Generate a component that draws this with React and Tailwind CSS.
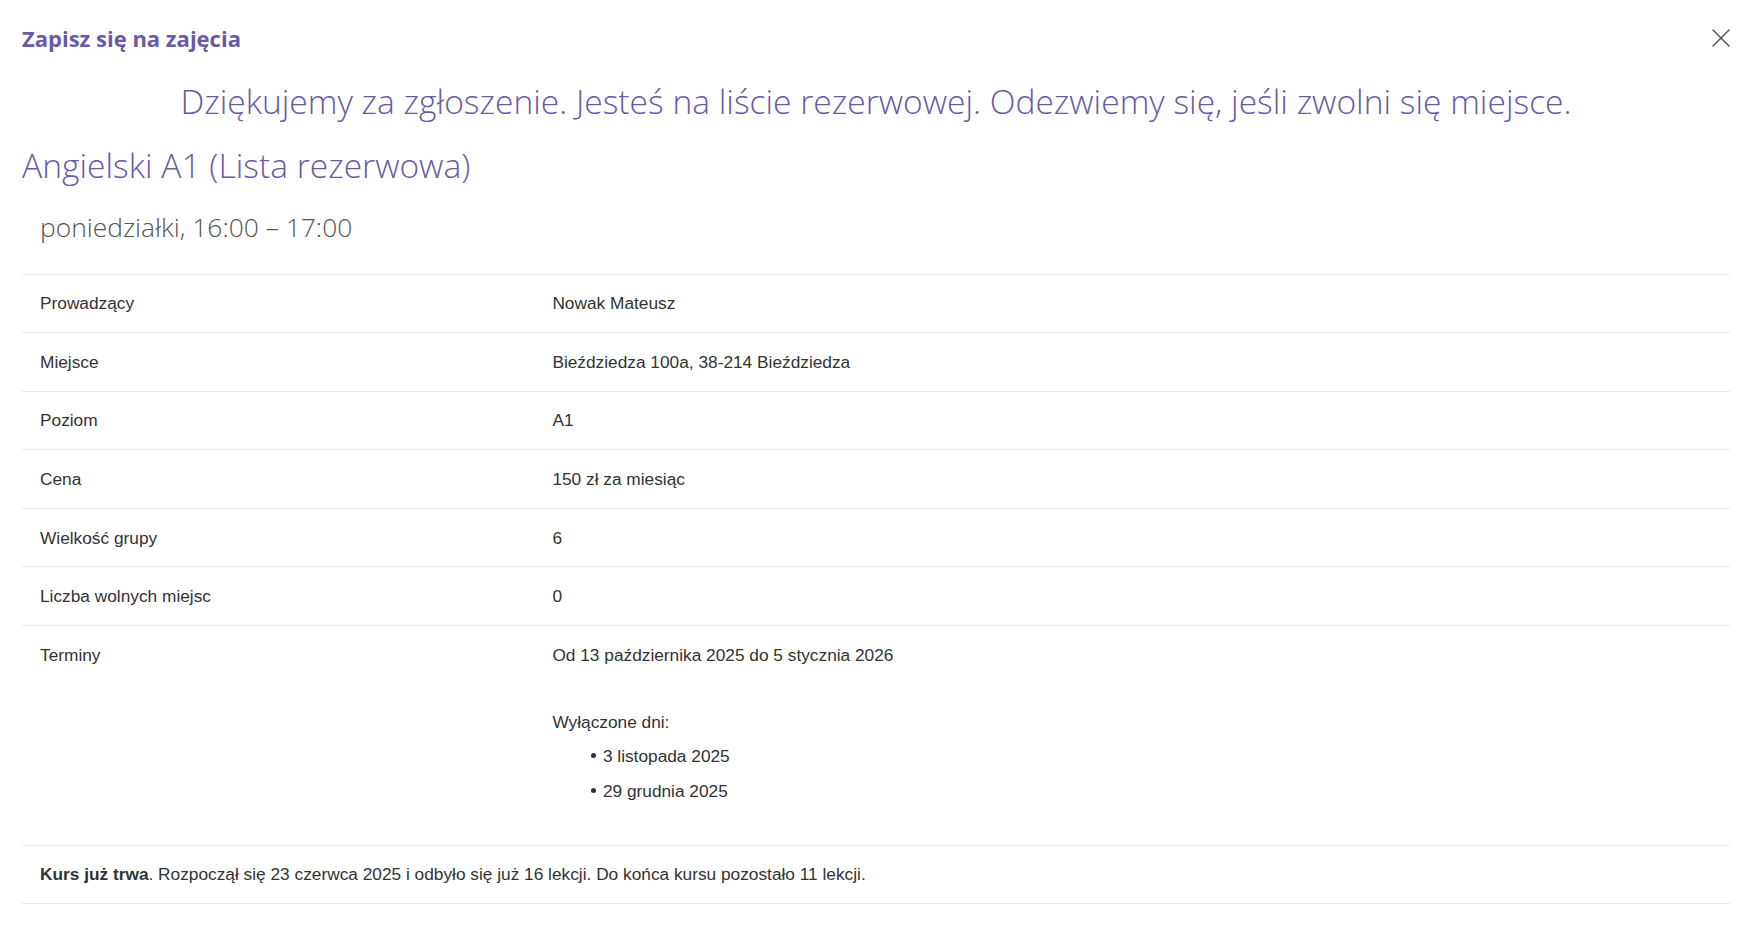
import { X } from "lucide-react";

const rows = [
  { label: "Prowadzący", value: "Nowak Mateusz" },
  { label: "Miejsce", value: "Bieździedza 100a, 38-214 Bieździedza" },
  { label: "Poziom", value: "A1" },
  { label: "Cena", value: "150 zł za miesiąc" },
  { label: "Wielkość grupy", value: "6" },
  { label: "Liczba wolnych miejsc", value: "0" },
];

const excludedDays = ["3 listopada 2025", "29 grudnia 2025"];

export default function App() {
  return (
    <div className="min-h-screen bg-white pl-[22px] pr-[19px] font-['Open_Sans',sans-serif]">
      <header className="flex items-center justify-between pt-[22px]">
        <h1 className="text-[22px] font-bold leading-[30px] text-[#6a5aa6]">Zapisz się na zajęcia</h1>
        <button className="-mr-[7px] text-[#555]" aria-label="Zamknij">
          <X size={32} strokeWidth={1.1} />
        </button>
      </header>

      <p className="mt-[24.5px] text-center text-[33.6px] font-light leading-[44px] text-[#6a5aa6]">
        Dziękujemy za zgłoszenie. Jesteś na liście rezerwowej. Odezwiemy się, jeśli zwolni się miejsce.
      </p>

      <h2 className="mt-[20px] text-[33.6px] font-light leading-[44px] text-[#6a5aa6]">
        Angielski A1 (Lista rezerwowa)
      </h2>

      <p className="mt-[24px] pl-[18px] text-[26.4px] font-light leading-[32px] text-[#555]">
        poniedziałki, 16:00 – 17:00
      </p>

      <table className="mt-[31px] w-full border-collapse text-left font-['Liberation_Sans',Arial,sans-serif] text-[17.3px] leading-[24px] text-[#333]">
        <tbody>
          {rows.map((row) => (
            <tr key={row.label} className="border-t border-[#e8e8e8]">
              <td className="w-[30%] px-[18px] py-[16.8px] align-top">{row.label}</td>
              <td className="px-[18px] py-[16.8px] align-top">{row.value}</td>
            </tr>
          ))}
          <tr className="border-t border-[#e8e8e8]">
            <td className="w-[30%] px-[18px] py-[16.8px] align-top">Terminy</td>
            <td className="px-[18px] py-[16.8px] align-top">
              <div>Od 13 października 2025 do 5 stycznia 2026</div>
              <div className="mt-[43px]">Wyłączone dni:</div>
              <ul className="mb-[25px] mt-[10px] space-y-[11px] pl-[38.5px]">
                {excludedDays.map((day) => (
                  <li key={day} className="flex items-center">
                    <span className="mr-[7px] h-[5px] w-[5px] rounded-full bg-[#333]" />
                    {day}
                  </li>
                ))}
              </ul>
            </td>
          </tr>
          <tr className="border-y border-[#e8e8e8]">
            <td colSpan={2} className="px-[18px] py-[16.8px]">
              <b>Kurs już trwa</b>. Rozpoczął się 23 czerwca 2025 i odbyło się już 16 lekcji. Do końca kursu pozostało
              11 lekcji.
            </td>
          </tr>
        </tbody>
      </table>
    </div>
  );
}
